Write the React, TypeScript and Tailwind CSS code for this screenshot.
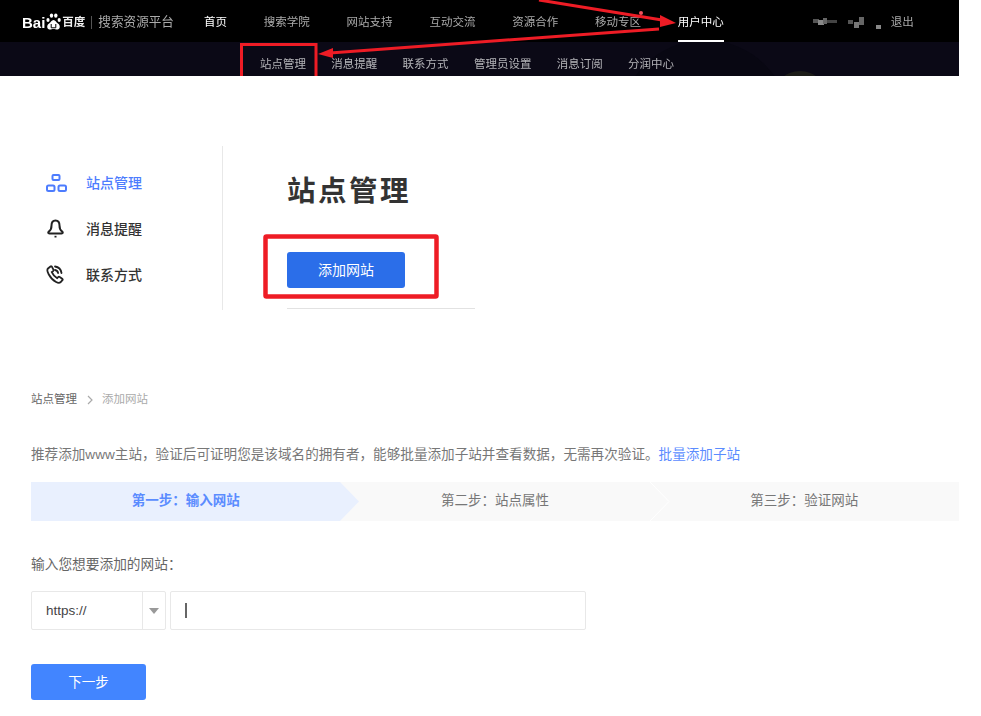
const font = "font-['Liberation_Sans','Noto_Sans_CJK_SC',sans-serif]";
const topLinks = ["搜索学院", "网站支持", "互动交流", "资源合作", "移动专区"];
const subLinks = ["站点管理", "消息提醒", "联系方式", "管理员设置", "消息订阅", "分润中心"];

const Paw = () => (
  <svg width="17" height="18" viewBox="0 0 17 18" fill="#fff">
    <ellipse cx="3" cy="7" rx="1.6" ry="2" />
    <ellipse cx="6.5" cy="2.6" rx="1.7" ry="2.2" />
    <ellipse cx="10.8" cy="2.6" rx="1.7" ry="2.2" />
    <ellipse cx="14.2" cy="7" rx="1.6" ry="2" />
    <path d="M8.5 7c-2 0-2.6 2.4-4.4 3.6C2.6 11.700 2 13 2.300 14.500 2.700 16.300 4.500 16.800 6 16.400c1.700-.4 3.300-.4 5 0 1.600.4 3.300-.1 3.700-1.900.3-1.500-.3-2.800-1.800-3.900C11.100 9.400 10.500 7 8.500 7z" />
    <path d="M6.200 11v3.800h4.600V11" fill="none" stroke="#000" strokeWidth="1" />
  </svg>
);

const SiteIcon = () => (
  <svg width="21" height="18" viewBox="0 0 21 18" fill="none" stroke="#4d7cfe" strokeWidth="2">
    <rect x="6.500" y="1" width="7" height="5" rx="1" />
    <rect x="1" y="11.500" width="7.500" height="5.500" rx="1.500" />
    <rect x="12.500" y="11.500" width="7.500" height="5.500" rx="1.500" />
  </svg>
);

const BellIcon = () => (
  <svg width="21" height="20" viewBox="0 0 21 20" fill="none" stroke="#222" strokeWidth="2">
    <path d="M9.500 1.500c-2.700 0-4 2.100-4 5 0 3-.7 4.700-2.500 5.900-1.300.9-.9 2.100.4 2.100h12.200c1.300 0 1.700-1.200.4-2.100-1.800-1.200-2.500-2.900-2.500-5.900 0-2.900-1.300-5-4-5z" />
    <path d="M9.500 16.800v1.700" />
  </svg>
);

const PhoneIcon = () => (
  <svg width="21" height="20" viewBox="0 0 21 20" fill="none" stroke="#222" strokeWidth="1.800" strokeLinecap="round">
    <path d="M4.500 1.500L2 3.500c-1 1-.8 3.200.8 6 1.700 3 4.400 6 7.300 7.500 1.900 1 3.600 1 4.600 0l1.700-1.800c.4-.5.300-1.100-.2-1.500l-2.500-1.800c-.5-.3-1-.3-1.400.1l-1.100 1.200c-1.500-.8-4.300-3.600-5.400-6.100l1.300-1c.4-.4.500-.9.300-1.400L6 1.800c-.3-.6-1-.7-1.500-.3z" />
    <path d="M9 1.500c3.500.5 6 3 6.500 6.500" />
    <path d="M9 5c1.600.3 2.800 1.500 3.100 3" />
  </svg>
);

const Annotations = () => (
  <svg className="absolute left-0 top-0 pointer-events-none" width="981" height="716" fill="none">
    <circle cx="641" cy="13" r="2" fill="#f0525c" />
    <path d="M241.500 76V44.500H316V76" stroke="#ee1c25" strokeWidth="3" />
    <path d="M539 0L662 20" stroke="#ee1c25" strokeWidth="3" />
    <path d="M676 23L660 15L660 27Z" fill="#ee1c25" />
    <path d="M659 29L330 53" stroke="#ee1c25" strokeWidth="3" />
    <path d="M318 54L333 48L333 58Z" fill="#ee1c25" />
    <rect x="265.500" y="236.500" width="171" height="60" rx="1" stroke="#ee1c25" strokeWidth="4.500" />
  </svg>
);

const Step = ({ label, active, arrow }: { label: string; active?: boolean; arrow?: boolean }) => (
  <div className={active ? "relative flex flex-1 items-center justify-center bg-[#e9f0fe] text-[13.500px] font-bold text-[#5b8cff]" : "relative flex flex-1 items-center justify-center text-[13.500px] text-[#777]"}>
    {label}
    {arrow && (
      <svg className="absolute left-full top-0 z-10" width="20" height="39" viewBox="0 0 20 39">
        <path d="M0 0L19 19.500L0 39" fill={active ? "#e9f0fe" : "#f9f9f9"} stroke={active ? "none" : "#fff"} strokeWidth="1" />
      </svg>
    )}
  </div>
);

const App = () => {
  return (
    <div className={`${font} relative h-[716px] w-[981px] overflow-hidden bg-white`}>
      <div className="w-[959px]">
        {/* Top nav */}
        <header className="flex h-[42px] items-center bg-black pl-[22px] pt-[3px] text-[11.500px] text-[#aaa] blur-[0.4px]">
          <div className="flex w-[182px] items-center">
            <span className="text-[15px] font-bold leading-none text-white">Bai</span>
            <Paw />
            <span className="text-[11.500px] font-bold text-[#eee]">百度</span>
            <span className="mx-[6px] h-[13px] w-px bg-[#555]" />
            <span className="text-[12.600px] text-[#aaa]">搜索资源平台</span>
          </div>
          <nav className="flex h-full items-center gap-[36.800px]">
            <a className="text-white">首页</a>
            {topLinks.map(link => <a key={link}>{link}</a>)}
            <a className="relative flex h-full items-center text-white">
              用户中心
              <span className="absolute bottom-0 left-0 h-[2px] w-full bg-white" />
            </a>
          </nav>
          <svg className="ml-[89px] blur-[0.6px]" width="68" height="14" viewBox="0 0 68 14">
            <rect x="0" y="3" width="6" height="4" fill="#555" />
            <rect x="5" y="4" width="6" height="5" fill="#888" />
            <rect x="10" y="2" width="4" height="6" fill="#666" />
            <rect x="14" y="4" width="10" height="3" fill="#444" />
            <rect x="35" y="4" width="5" height="4" fill="#555" />
            <rect x="41" y="6" width="5" height="6" fill="#777" />
            <rect x="46" y="1" width="5" height="8" fill="#666" />
            <rect x="63" y="9" width="5" height="4" fill="#888" />
          </svg>
          <a className="ml-[10px] text-[#aaa]">退出</a>
        </header>

        {/* Sub nav */}
        <div className="relative flex h-[34px] items-center gap-[25.300px] overflow-hidden bg-[#0b0916] pl-[260px] pt-[12px] text-[11.500px] text-[#b4b4b8] blur-[0.4px]">
          <div className="absolute left-[620px] top-[-2px] h-[170px] w-[170px] rounded-full bg-[#080712]" />
          <div className="absolute left-[773px] top-[29px] h-[54px] w-[54px] rounded-full bg-[#1c1c18]" />
          {subLinks.map(link => <a key={link} className="relative">{link}</a>)}
        </div>

        {/* Site management */}
        <section className="mt-[70px] flex">
          <aside className="flex h-[164px] w-[223px] flex-col gap-[26px] border-r border-[#e8e8e8] pl-[46px] pt-[27px] text-[14px] text-[#333]">
            <div className="flex h-[20px] items-center gap-[19px] font-medium text-[#4d7cfe]">
              <SiteIcon />站点管理
            </div>
            <div className="flex h-[20px] items-center gap-[19px] font-medium">
              <BellIcon />消息提醒
            </div>
            <div className="flex h-[20px] items-center gap-[19px] font-medium">
              <PhoneIcon />联系方式
            </div>
          </aside>
          <div className="ml-[64px] w-[188px]">
            <h1 className="mt-[27px] text-[28.500px] font-bold leading-[36px] tracking-[2.500px] text-[#333]">站点管理</h1>
            <button className="mt-[43px] h-[36px] w-[118px] rounded-[3px] bg-[#2b6ee9] text-[14px] text-white">添加网站</button>
            <div className="mt-[20px] h-px bg-[#e2e2e2]" />
          </div>
        </section>

        {/* Add site */}
        <section className="pl-[31px]">
          <div className="mt-[81px] flex h-[18px] items-center text-[11.500px] text-[#666]">
            站点管理
            <svg className="mx-[9.500px]" width="6" height="10" viewBox="0 0 6 10" fill="none" stroke="#aaa" strokeWidth="1.200">
              <path d="M1 1l4 4-4 4" />
            </svg>
            <span className="text-[#aaa]">添加网站</span>
          </div>
          <p className="mt-[36px] h-[20px] text-[13.600px] leading-[20px] text-[#777]">
            推荐添加www主站，验证后可证明您是该域名的拥有者，能够批量添加子站并查看数据，无需再次验证。<a className="text-[#5b8cff]">批量添加子站</a>
          </p>
          <div className="mt-[17px] flex h-[39px] bg-[#f9f9f9]">
            <Step label="第一步：输入网站" active arrow />
            <Step label="第二步：站点属性" arrow />
            <Step label="第三步：验证网站" />
          </div>
          <div className="mt-[35px] h-[18px] text-[13.700px] leading-[18px] text-[#666]">输入您想要添加的网站：</div>
          <div className="mt-[17px] flex h-[39px] gap-[4px]">
            <div className="flex w-[135px] rounded-[2px] border border-[#e8e8e8]">
              <span className="flex-1 pl-[14px] text-[13.500px] leading-[37px] text-[#444]">https://</span>
              <span className="flex w-[23px] items-center justify-center border-l border-[#e8e8e8]">
                <span className="h-0 w-0 border-x-[5px] border-t-[6px] border-x-transparent border-t-[#999]" />
              </span>
            </div>
            <div className="flex w-[416px] items-center rounded-[2px] border border-[#e8e8e8] pl-[14px]">
              <span className="h-[15px] w-[1.500px] bg-[#666]" />
            </div>
          </div>
          <button className="mt-[34px] h-[36px] w-[115px] rounded-[3px] bg-[#4285ff] pt-[3px] text-[13.500px] text-white">下一步</button>
        </section>
      </div>
      <Annotations />
    </div>
  );
};
export default App;
